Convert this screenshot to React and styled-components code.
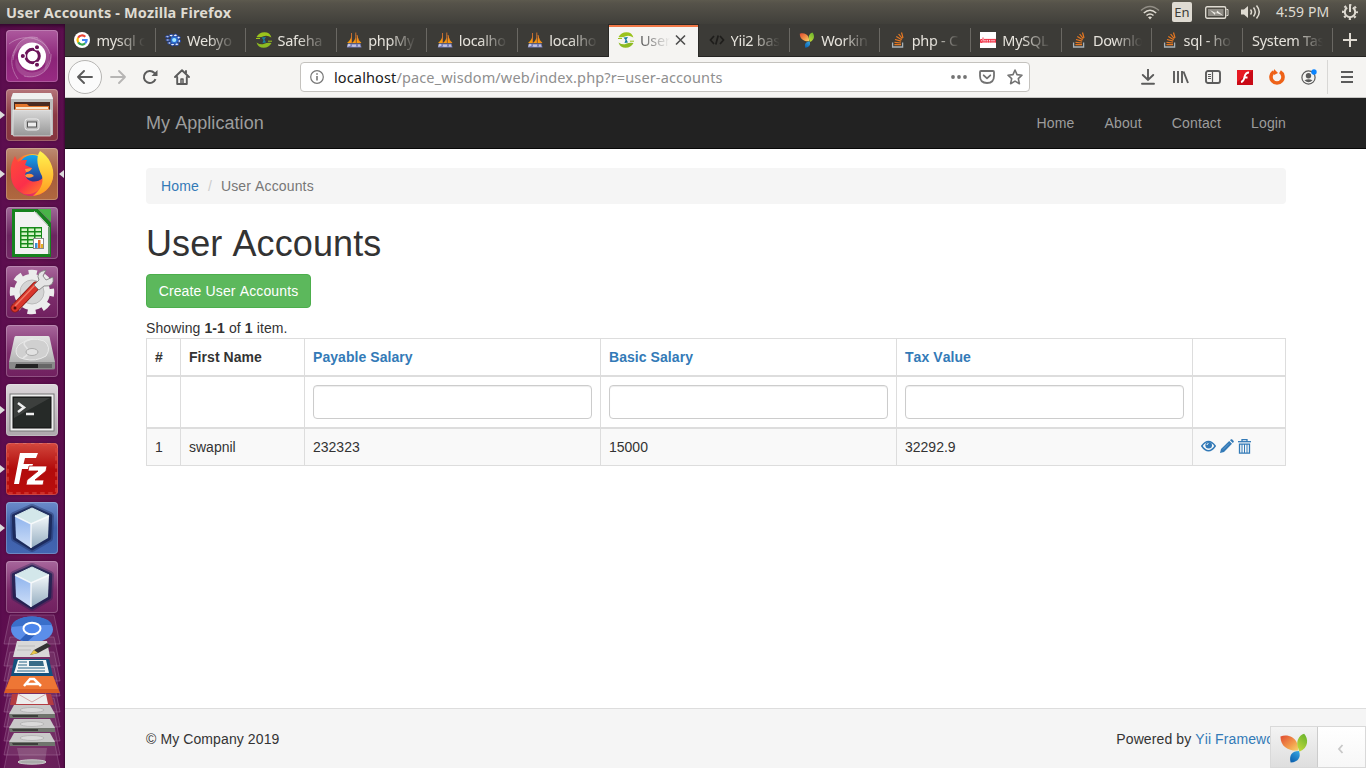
import React from "react";
import styled, { createGlobalStyle, css } from "styled-components";

const GlobalStyle = createGlobalStyle`
  * { box-sizing: border-box; }
  body { margin: 0; overflow: hidden; background: #fff; }
  svg { display: block; flex: none; }
`;

const ui = `"Noto Sans", "Open Sans", sans-serif`;
const web = `"Liberation Sans", Helvetica, Arial, sans-serif`;

/* ---------- desktop shell ---------- */
const Desktop = styled.div`
  width: 1366px;
  height: 768px;
  display: flex;
  flex-direction: column;
  overflow: hidden;
`;
const TitleBar = styled.header`
  height: 24px;
  flex: none;
  display: flex;
  justify-content: space-between;
  align-items: center;
  padding: 0 8px 0 6px;
  background: linear-gradient(#5d5a4e 0, #56534a 3px, #403f3a 24px);
  color: #dfdbd2;
  font: 14px/24px ${ui};
`;
const WindowTitle = styled.div`
  font-weight: 700;
  font-size: 14.5px;
  letter-spacing: 0.14px;
  white-space: nowrap;
`;
const Indicators = styled.div`
  display: flex;
  align-items: center;
`;
const Indicator = styled.div`
  margin-left: ${(p) => p.$gap || 0}px;
`;
const Keyboard = styled(Indicator)`
  width: 20px;
  height: 20px;
  border-radius: 2px;
  background: #dfdbd2;
  color: #3c3b37;
  text-align: center;
  font-size: 13px;
  line-height: 20px;
`;
const Clock = styled(Indicator)`
  width: 54px;
  letter-spacing: 0.1px;
  white-space: nowrap;
`;
const Main = styled.div`
  display: flex;
  flex: 1;
  min-height: 0;
`;

/* ---------- launcher ---------- */
const Launcher = styled.aside`
  width: 65px;
  flex: none;
  padding-top: 6px;
  display: flex;
  flex-direction: column;
  gap: 7px;
  background: linear-gradient(90deg, #5c0d4f, #63114f 50%, #5b0e4d 97%, #3e0a35);
  box-shadow: inset 0 5px 4px -3px #2d0628;
`;
const LaunchRow = styled.div`
  display: flex;
  align-items: center;
  height: 52px;
`;
const Pip = styled.i`
  width: 5px;
  height: 8px;
  margin-right: ${(p) => (p.$right ? 0 : 1)}px;
  margin-left: ${(p) => (p.$right ? 1 : 0)}px;
  background: ${(p) => (p.$on ? "#dcdcdc" : "transparent")};
  clip-path: ${(p) => (p.$right ? "polygon(100% 0, 0 50%, 100% 100%)" : "polygon(0 0, 100% 50%, 0 100%)")};
`;
const Tile = styled.div`
  width: 52px;
  height: 52px;
  border-radius: 4px;
  background: ${(p) => p.$bg};
  box-shadow: inset 0 0 0 1px rgba(255, 255, 255, 0.22), 0 0 3px rgba(30, 0, 30, 0.4);
  overflow: hidden;
`;
const FoldedStack = styled.div`
  margin-top: -6px;
`;

/* ---------- browser chrome ---------- */
const Browser = styled.div`
  flex: 1;
  min-width: 0;
  display: flex;
  flex-direction: column;
`;
const TabStrip = styled.div`
  height: 33px;
  flex: none;
  display: flex;
  background: #3c3b37;
  border-bottom: 1px solid #252422;
`;
const Tab = styled.div`
  width: 90.6px;
  height: 32px;
  flex: none;
  display: flex;
  align-items: center;
  position: relative;
  padding-left: 9.4px;
  color: #e6e3dc;
  font: 14.5px/32px ${ui};
  &::after {
    content: "";
    align-self: center;
    width: 1px;
    height: 24px;
    margin-left: auto;
    background: #6a6863;
  }
  ${(p) =>
    p.$active &&
    css`
      width: 89.4px;
      margin-right: 1.2px;
      height: 33px;
      padding-bottom: 1px;
      background: #f5f4f2;
      color: #5c5c5c;
      box-shadow: inset 0 1px #2b2a27, inset 0 3px #f07746, 0 0 0 1px #2b2a27;
      clip-path: inset(0 -1px 0 -1px);
      &::after { display: none; }
    `}
  ${(p) => p.$beforeActive && css`&::after { display: none; }`}
`;
const TabIcon = styled.div`
  width: 16px;
  height: 16px;
  flex: none;
  margin-right: 6px;
`;
const TabText = styled.div`
  width: ${(p) => p.$w}px;
  white-space: nowrap;
  letter-spacing: -0.3px;
  mask-image: linear-gradient(90deg, #000 calc(100% - 28px), transparent);
`;
const NewTab = styled.div`
  flex: 1;
  display: flex;
  align-items: center;
  justify-content: center;
`;
const ToolBar = styled.div`
  height: 41px;
  flex: none;
  display: flex;
  align-items: center;
  padding: 0 13px 0 3px;
  background: #f5f4f2;
  border-bottom: 1px solid #c6c5c3;
`;
const BackButton = styled.div`
  width: 34px;
  height: 34px;
  flex: none;
  border: 1px solid #b6b5b3;
  border-radius: 50%;
  background: #fbfbfb;
  display: grid;
  place-items: center;
`;
const ToolIcon = styled.div`
  margin-left: ${(p) => p.$gap}px;
`;
const UrlBar = styled.div`
  width: 730px;
  height: 30px;
  flex: none;
  margin-left: 110px;
  padding: 0 6px 0 9px;
  display: flex;
  align-items: center;
  background: #fff;
  border: 1px solid #c4c2be;
  border-radius: 4px;
`;
const Url = styled.div`
  flex: 1;
  margin-left: 8px;
  font: 14.5px/28px ${ui};
  letter-spacing: 0.13px;
  color: #8f8f8f;
  white-space: nowrap;
  b { color: #1a1a1a; font-weight: 400; }
`;
const ToolDivider = styled.div`
  width: 1px;
  height: 34px;
  margin-left: 10px;
  background: #d8d7d5;
`;

/* ---------- web page ---------- */
const Page = styled.div`
  flex: 1;
  min-height: 0;
  display: flex;
  flex-direction: column;
  background: #fff;
  color: #333;
  font: 14px/20px ${web};
  font-kerning: none;
  letter-spacing: 0.1px;
  position: relative;
`;
const Container = styled.div`
  width: 1140px;
  margin-left: 81px;
`;
const Navbar = styled.nav`
  height: 51px;
  flex: none;
  background: #222;
  border-bottom: 1px solid #080808;
`;
const NavInner = styled(Container)`
  display: flex;
  justify-content: space-between;
  line-height: 50px;
  color: #9d9d9d;
`;
const Brand = styled.div`
  font-size: 18px;
  letter-spacing: 0.05px;
`;
const NavLinks = styled.div`
  display: flex;
  gap: 30px;
  letter-spacing: 0.14px;
`;
const Content = styled(Container)`
  flex: 1;
  padding-top: 19px;
`;
const Breadcrumb = styled.div`
  height: 36px;
  padding: 8px 15px;
  background: #f5f5f5;
  border-radius: 4px;
  color: #777;
  letter-spacing: 0.14px;
  i { padding: 0 9px; color: #ccc; font-style: normal; }
`;
const Link = styled.span`
  color: #337ab7;
`;
const Heading = styled.h1`
  margin: 20px 0 10px;
  font-size: 36px;
  line-height: 40px;
  font-weight: 400;
`;
const GreenButton = styled.div`
  width: 165px;
  height: 34px;
  margin-bottom: 10px;
  border: 1px solid #4cae4c;
  border-radius: 4px;
  background: #5cb85c;
  color: #fff;
  line-height: 32px;
  text-align: center;
  letter-spacing: 0.14px;
  white-space: nowrap;
`;
const Grid = styled.div`
  border: solid #ddd;
  border-width: 1px 0 0 1px;
`;
const Row = styled.div`
  display: grid;
  grid-template-columns: 34px 124px 296px 296px 296px 93px;
  height: ${(p) => p.$h}px;
  border-bottom: ${(p) => p.$line}px solid #ddd;
  background: ${(p) => p.$bg || "#fff"};
  font-weight: ${(p) => (p.$head ? 700 : 400)};
  letter-spacing: ${(p) => (p.$head ? 0.06 : 0)}px;
`;
const Cell = styled.div`
  border-right: 1px solid #ddd;
  padding: 8px;
  white-space: nowrap;
`;
const FilterInput = styled.div`
  height: 34px;
  border: 1px solid #ccc;
  border-radius: 4px;
  box-shadow: inset 0 1px 1px rgba(0, 0, 0, 0.075);
`;
const Actions = styled.div`
  display: flex;
  gap: 4px;
  padding-top: 2px;
`;
const Footer = styled.footer`
  height: 60px;
  flex: none;
  background: #f5f5f5;
  border-top: 1px solid #ddd;
`;
const FooterInner = styled(Container)`
  display: flex;
  justify-content: space-between;
  padding-top: 20px;
`;
const DebugBar = styled.div`
  position: absolute;
  right: 0;
  bottom: 0;
  width: 96px;
  height: 42px;
  display: flex;
  border: 1px solid #d9d9d9;
  background: linear-gradient(#fff, #f7f7f7);
`;
const DebugLogo = styled.div`
  width: 47px;
  padding-top: 1px;
  display: grid;
  place-items: center;
  background: linear-gradient(#f3f3f3, #dedede);
  border-right: 1px solid #ccc;
`;
const DebugToggle = styled.div`
  flex: 1;
  display: grid;
  place-items: center;
  padding: 3px 2px 0 0;
`;

/* ---------- favicons ---------- */
const Google = () => (
  <svg width="16" height="16" viewBox="0 0 16 16" fill="none" strokeWidth="2.2">
    <circle cx="8" cy="8" r="8" fill="#fff" />
    <path d="M4.1 5.7A4.6 4.6 0 0 1 11.3 4.8" stroke="#ea4335" />
    <path d="M4.2 10.4A4.6 4.6 0 0 1 4.1 5.7" stroke="#fbbc05" />
    <path d="M11.2 11.3A4.6 4.6 0 0 1 4.2 10.4" stroke="#34a853" />
    <path d="M8 8H12.6A4.6 4.6 0 0 1 11.2 11.3" stroke="#4285f4" />
  </svg>
);
const Webyog = () => (
  <svg width="16" height="16" viewBox="0 0 16 16">
    <g fill="#e8eefc" stroke="#1c3f9c" strokeWidth="1">
      <ellipse cx="2.4" cy="4.8" rx="1.9" ry="1" /><ellipse cx="2.8" cy="8" rx="2" ry="1" />
      <ellipse cx="6.2" cy="3.6" rx="1.8" ry="1.3" /><ellipse cx="10.4" cy="3.4" rx="1.8" ry="1.3" />
      <ellipse cx="13.6" cy="5.6" rx="1.6" ry="1.4" /><ellipse cx="14.2" cy="9" rx="1.3" ry="1.5" />
      <ellipse cx="11.8" cy="12.2" rx="1.9" ry="1.3" /><ellipse cx="7.6" cy="12.6" rx="1.9" ry="1.2" />
      <ellipse cx="4.4" cy="11" rx="1.8" ry="1.1" />
    </g>
    <circle cx="9.200" cy="8" r="3.800" fill="#2a6bd0" /><circle cx="9.200" cy="8" r="2.100" fill="#9fe6ff" />
  </svg>
);
const Safe = () => (
  <svg width="16" height="16" viewBox="0 0 16 16">
    <path d="M.5 5Q3 .2 8.5.2T15.4 5.6Q11 2.8 7.6 4.3T.5 5Z" fill="#9bc31c" />
    <path d="M15.5 11Q13 15.8 7.6 15.8T.5 10.4Q4.8 13.4 8.2 11.8T15.5 11Z" fill="#8dbb22" />
    <path d="M0 6.500h4M12 9.200h4" stroke="#9bc31c" />
    <path d="M5.500 5.500 10 5 8.400 7.500 10 10.500 6.500 11 7.500 8Z" fill="#197f9d" />
  </svg>
);
const Pma = () => (
  <svg width="16" height="16" viewBox="0 0 16 16">
    <path d="M5.500 1Q6 7 1 11H5.500ZM9.500.5Q11 7 6 11H10ZM11 3Q12 8 15.500 11H10.500Z" fill="#f89c0e" />
    <path d="M5.500 1V11M9.800.5V11M11 3Q11.300 8 14 11" fill="none" stroke="#e57a30" strokeWidth=".8" />
    <path d="M.8 15.500 2 11.500H14.500L15.500 15.500Z" fill="#777db5" />
    <path d="M2 15V12.400H4V13.600H2M6 15 7 12.500 8 15 9 12.500 10 15M12 15 13 12.500 14 15" fill="none" stroke="#d9d9ee" strokeWidth=".8" />
  </svg>
);
const CodeIcon = () => (
  <svg width="16" height="16" viewBox="0 0 16 16" fill="none" stroke="#1e1d1b" strokeWidth="1.700">
    <path d="M5 4 1.500 8 5 12M11 4 14.500 8 11 12M9.200 3.500 6.800 12.500" />
  </svg>
);
const Yii = ({ s = 16 }) => (
  <svg width={s} height={s} viewBox="0 0 30 31">
    <defs>
      <linearGradient id="yo" x2="1" y2="1"><stop stopColor="#e04b31" /><stop offset=".6" stopColor="#f29a4b" /><stop offset="1" stopColor="#f6d46a" /></linearGradient>
      <linearGradient id="yg" x1=".7" x2=".2" y2="1"><stop stopColor="#6cb52d" /><stop offset="1" stopColor="#c4da3a" /></linearGradient>
      <linearGradient id="yb" x1=".8" x2=".2" y2="1"><stop stopColor="#35a4df" /><stop offset="1" stopColor="#0a5fae" /></linearGradient>
    </defs>
    <path d="M1 3.500C8 1 15 4 17.500 9 19 12 19.500 15 19.300 18 11 19 1 15 1 3.500Z" fill="url(#yo)" />
    <path d="M25.500.8C30 6 30.500 15 20.500 19.500 20 15 17 13 19 7 20.500 3.500 22.500 1.500 25.500.8Z" fill="url(#yg)" />
    <path d="M20 18.500C22.500 24 20 30 11.500 30.500 9.500 23 13 18.500 20 18.500Z" fill="url(#yb)" />
  </svg>
);
const Stack = () => (
  <svg width="16" height="16" viewBox="0 0 16 16" fill="none">
    <path d="M2.600 10.500V15H12.600V10.500" stroke="#a9b2b8" strokeWidth="1.300" />
    <path d="M4.400 12.700H11M4.500 10.300 11 11M5 7.500 11.200 9.200M6.300 4.500 11.700 7.700M8.600 2 12.300 6.700M11.500.5 13 5.800" stroke="#e87922" strokeWidth="1.200" />
  </svg>
);
const RedWord = () => (
  <svg width="16" height="16" viewBox="0 0 16 16">
    <rect width="16" height="16" fill="#fff" />
    <path d="M.5 7.500H2V10.500H.5ZM3 5.500V10.500M5 7V10.500M6.800 7V10.500M8.500 7V10.500M10.300 7V10.500M12 7V10.500M14 7V10.500M15.500 7V10.500M.5 9.900H16M4 7.400H16" fill="none" stroke="#f0374b" strokeWidth="1" />
  </svg>
);

const G = "#5b5b5b";
const L = "#dfdbd2";

/* ---------- launcher icons ---------- */
const Tri = () => (
  <svg width="52" height="52" viewBox="0 0 52 52">
    <path d="M7 30C8 12 20 4 32 8 44 13 48 30 38 42 42 26 38 16 26 14 16 14 9 20 7 30Z" fill="#fff" opacity=".16" />
    <path d="M45 24C46 40 32 50 18 46 10 42 8 34 10 28 14 40 22 44 30 42 38 40 43 34 45 24Z" fill="#fff" opacity=".14" />
    <g fill="none" stroke="#fff" opacity=".3">
      <path d="M7 30C8 12 20 4 32 8" /><path d="M3 14C18 2 40 8 44 24" /><path d="M12 49C4 38 4 26 10 18" /><path d="M45 24C46 40 32 50 18 46" />
    </g>
    <circle cx="26" cy="26.500" r="14" fill="#fff" />
    <circle cx="26.500" cy="26" r="6.800" fill="none" stroke="#6b1358" strokeWidth="3" />
    <g fill="#6b1358" stroke="#fff" strokeWidth="1.100"><circle cx="16.800" cy="26" r="2.600" /><circle cx="31" cy="17.300" r="2.600" /><circle cx="31" cy="34.800" r="2.600" /></g>
  </svg>
);
const Files = () => (
  <svg width="52" height="52" viewBox="0 0 52 52">
    <defs><linearGradient id="fm" y2="1" x2="0"><stop stopColor="#d9d9d9" /><stop offset="1" stopColor="#979797" /></linearGradient></defs>
    <path d="M7 4H45L47 9V46H5V9Z" fill="#bcbcbc" />
    <path d="M7 4H45L47 10H5Z" fill="#f0f0f0" />
    <path d="M8 13H44V22H8Z" fill="#4a2a22" />
    <path d="M9 15H21L23 17H43V22H9Z" fill="#e3752b" /><path d="M10 18H42V20H10Z" fill="#f8e7d0" />
    <path d="M7 21H45V46Q45 47 44 47H8Q7 47 7 46Z" fill="url(#fm)" stroke="#eee" strokeWidth=".7" />
    <rect x="19" y="30" width="14" height="11" rx="2.500" fill="#bbb" stroke="#eee" />
    <rect x="21.500" y="33" width="9" height="5" fill="#eee" stroke="#555" />
  </svg>
);
const Firefox = () => (
  <svg width="52" height="52" viewBox="0 0 52 52">
    <defs>
      <radialGradient id="ff" cx=".82" cy=".15" r="1"><stop stopColor="#fff24a" /><stop offset=".35" stopColor="#ffbe2e" /><stop offset=".65" stopColor="#ff5b33" /><stop offset="1" stopColor="#d51b7a" /></radialGradient>
      <linearGradient id="fb" x2="0" y2="1"><stop stopColor="#13a7ee" /><stop offset="1" stopColor="#2a2c86" /></linearGradient>
      <linearGradient id="fy" x2="0" y2="1"><stop stopColor="#fff44f" /><stop offset="1" stopColor="#ff9a1f" /></linearGradient>
      <linearGradient id="fr" x1=".1" x2=".9" y2="1"><stop stopColor="#ff4a3a" /><stop offset=".6" stopColor="#fb2f4a" /><stop offset="1" stopColor="#ff7a2a" /></linearGradient>
    </defs>
    <circle cx="26" cy="27" r="21" fill="url(#ff)" />
    <circle cx="26.500" cy="21" r="14" fill="url(#fb)" />
    <path d="M5 26C4 18 7 12 9 8L12 14C14 12 17 12 21 12L19 17 26 20C25 24 19 23 19 27 21 34 30 36 37 30 38 40 28 48 18 46 9 42 5 35 5 26Z" fill="url(#fr)" />
    <path d="M34 3C43 8 49 20 47 30 45 40 37 47 27 48 34 42 38 36 36 28 32 20 29 10 34 3Z" fill="url(#fy)" />
    <path d="M19 21 26 20Q24 24 20 24ZM19 27Q25 24 28 28 24 31 20 29Z" fill="#ff9640" />
  </svg>
);
const Calc = () => (
  <svg width="52" height="52" viewBox="0 0 52 52">
    <path d="M6 2H32L45 16V50H6Z" fill="#16821e" /><path d="M9 5H30L42 18V47H9Z" fill="#f2f2f2" />
    <path d="M32 2H45V15Z" fill="#49b348" /><path d="M28 4 43 20V47" fill="none" stroke="#bbb" />
    <rect x="14" y="20" width="22" height="21" fill="#178a1a" />
    <g fill="#d6f5c8">{[0, 1, 2, 3, 4].map((r) => [0, 1, 2].map((c) => <rect key={`${r}${c}`} x={15.5 + c * 7} y={21.5 + r * 4} width="5.5" height="2.5" />))}</g>
    <rect x="27.500" y="31.500" width="10" height="10" fill="#fff" stroke="#888" />
    <path d="M29 36h2.500v5H29Z" fill="#3c8fd2" /><path d="M32 33h2.500v8H32Z" fill="#e36c22" /><path d="M35 37h2v4h-2Z" fill="#e5b022" />
  </svg>
);
const Settings = () => (
  <svg width="52" height="52" viewBox="0 0 52 52">
    <circle cx="26" cy="26" r="14" fill="none" stroke="#ececec" strokeWidth="8" />
    <circle cx="26" cy="26" r="19.500" fill="none" stroke="#ececec" strokeWidth="5.500" strokeDasharray="8.300 7.015" strokeDashoffset="4" />
    <circle cx="26" cy="26" r="12" fill="#d5d5d5" stroke="#bbb" />
    <path d="M9 42 30 20" stroke="#8d1c18" strokeWidth="9" strokeLinecap="round" /><path d="M9 42 30 20" stroke="#d9362c" strokeWidth="7" strokeLinecap="round" />
    <path d="M9 40 29 19" stroke="#ee7a68" strokeWidth="1.500" /><circle cx="9" cy="42" r="1.500" fill="#5a0b0b" />
    <path d="M28 19 33 14Q29 6 40 4L37 10 40 14 47 11Q49 21 38 20L33 24Z" fill="#e5e5e5" stroke="#777" strokeWidth=".8" />
  </svg>
);
const Disk = () => (
  <svg width="52" height="52" viewBox="0 0 52 52">
    <defs><linearGradient id="dk" x2="0" y2="1"><stop stopColor="#e4e4e4" /><stop offset="1" stopColor="#b4b4b4" /></linearGradient></defs>
    <path d="M10 11H42Q43 11 43.500 12L49 37H3L8.500 12Q9 11 10 11Z" fill="url(#dk)" /><path d="M3 37H49V43Q49 44.500 47 44.500H5Q3 44.500 3 43Z" fill="#8a8a8a" /><path d="M10 39H32V43H9Z" fill="#222" /><path d="M32 39H46V43H32Z" fill="#666" />
    <path d="M11 30Q8 24 14 19 25 11 38 16 46 22 40 31 30 37 18 34 12 33 11 30Z" fill="#d0d0d0" stroke="#e9e9e9" />
    <path d="M17 33Q26 28 20 22T27 14" fill="none" stroke="#e6e6e6" strokeWidth="1.500" />
    <ellipse cx="26" cy="27" rx="6" ry="3.500" fill="#e2e2e2" stroke="#aaa" />
  </svg>
);
const Terminal = () => (
  <svg width="52" height="52" viewBox="0 0 52 52">
    <rect x="4" y="10" width="44" height="37" fill="#efefef" stroke="#777" /><rect x="7" y="13" width="38" height="31" fill="#262a28" stroke="#111" />
    <path d="M8 14H44L8 34Z" fill="#fff" opacity=".1" />
    <path d="M12 19 18 23.500 12 28M20 30H28" fill="none" stroke="#eee" strokeWidth="2.500" />
  </svg>
);
const Filezilla = () => (
  <svg width="52" height="52" viewBox="0 0 52 52">
    <rect x="1.500" y="1.500" width="49" height="49" rx="3" fill="none" stroke="#d8463e" strokeWidth="3" strokeDasharray="4.500 3.500" opacity=".6" />
    <path d="M14 10H32L30 15H19L17.500 21H27L25.500 26H16L13 41H8Z" fill="#fff" />
    <path d="M23 23H41L40 28 29 37H38L37 42H20L21 37 32 28H22Z" fill="#fff" stroke="#b20b0b" strokeWidth=".8" />
  </svg>
);
const Cube = () => (
  <svg width="52" height="52" viewBox="0 0 52 52">
    <defs><linearGradient id="cl" x2="0" y2="1"><stop stopColor="#8eb3ed" /><stop offset="1" stopColor="#cfdff8" /></linearGradient><linearGradient id="cr" x2="0" y2="1"><stop stopColor="#f2f7fa" /><stop offset="1" stopColor="#94adc0" /></linearGradient></defs>
    <g fill="#17224f" stroke="#17224f" strokeLinejoin="round">
      <path d="M26 6 44 14 43 36 26 46 9 36 8 14Z" strokeWidth="8" opacity=".35" />
      <path d="M26 6 44 14 43 36 26 46 9 36 8 14Z" strokeWidth="4.500" opacity=".75" />
    </g>
    <path d="M26 6 43 14 25 22 9 14Z" fill="#d3e7ea" stroke="#d3e7ea" strokeLinejoin="round" /><path d="M9 14 25 22V46L10 36Z" fill="url(#cl)" /><path d="M25 22 43 14 42 36 25 46Z" fill="url(#cr)" />
    <path d="M9 14 25 22 43 14M25 22V46" fill="none" stroke="#fff" strokeWidth="1.500" opacity=".8" />
  </svg>
);
const drawers = [705, 719, 733];
const Folded = () => (
  <svg width="65" height="154" viewBox="0 614 65 154">
    <g fill="#fff" fillOpacity=".07" stroke="#c79bc0" strokeOpacity=".3" strokeWidth="1">
      {[615, 637, 652, 667, 683, 698, 712, 726, 740].map((y) => <path key={y} d={`M10 ${y}H54L60 ${y + 29}H4Z`} />)}
    </g>
    <ellipse cx="32" cy="629.500" rx="21" ry="13" fill="#5b8ee9" /><path d="M11 627Q14 617 32 616.500 49 617 52 625H32Z" fill="#3a6fca" /><path d="M20 640 29 631 36 634 27 642Z" fill="#2f61bd" />
    <ellipse cx="32" cy="628.500" rx="8.500" ry="5.800" fill="#4c86ec" stroke="#fff" strokeWidth="2" />
    <path d="M17 641H47L50 657H13Z" fill="#d8d8d8" /><path d="M18 646h17M17 650h14" stroke="#bbb" /><path d="M30 655 34 650 47 643 51 646 38 653Z" fill="#333" /><path d="M30 655 34 650 38 653Z" fill="#e8c648" />
    <path d="M14 659H49L53 676H11Z" fill="#14517d" /><path d="M18 660H46L49 673H14Z" fill="#f2f5f6" /><path d="M19 662h8M18 665h9M18 668h27M17 671h28" stroke="#256285" /><path d="M29 661H43L44 666H29Z" fill="#386b88" />
    <path d="M11 676H53L60 693H4Z" fill="#d95b23" /><path d="M11 676H53L58 689H6Z" fill="#ee7635" /><path d="M24 686 30 679H34L41 686M26 684H38" fill="none" stroke="#fff" strokeWidth="2.500" />
    <path d="M12 694H51L54 705H10Z" fill="#b33c42" /><path d="M18 694H46L48 704H16Z" fill="#ededed" /><path d="M18 694 32 702 46 694" fill="none" stroke="#d6a8a8" />
    {drawers.map((y) => (
      <g key={y}><path d={`M14 ${y}H50L55 ${y + 9}H9Z`} fill="#c9c9c9" /><path d={`M9 ${y + 9}H55V${y + 13}H10Z`} fill="#70756e" /><path d={`M12 ${y + 10}H38V${y + 12}H13Z`} fill="#3c3e3b" /><ellipse cx="32" cy={y + 5} rx="12" ry="2.500" fill="#dadada" stroke="#b8b8b8" /></g>
    ))}
    <path d="M17 748H47L45 762H20Z" fill="#ccc" opacity=".22" /><ellipse cx="32" cy="762" rx="14" ry="2.200" fill="#aaa" stroke="#ccc" />
  </svg>
);

const purple = "linear-gradient(#a8679c, #7d2d6c 55%, #70205f)";
const launchers = [
  [Tri, "linear-gradient(#ad5a9e, #8b2478 55%, #992b83)", 0],
  [Files, "linear-gradient(#b5757a, #8b3a44 50%, #86363f)", 1],
  [Firefox, "linear-gradient(#bd8b72, #a55c3c 50%, #b0683f)", 1],
  [Calc, "linear-gradient(#a06a98, #6c2560 55%, #742a66)", 0],
  [Settings, purple, 0],
  [Disk, purple, 0],
  [Terminal, "linear-gradient(#dcd6da, #aea7ac)", 1],
  [Filezilla, "linear-gradient(#d2483d, #b20b0b 50%, #b90e0d)", 1],
  [Cube, "linear-gradient(#6b8bca, #3d5ea8 50%, #4366b2)", 1],
  [Cube, purple, 0],
];

const tabs = [
  [Google, "mysql c"], [Webyog, "Webyo"], [Safe, "Safeha"], [Pma, "phpMy"], [Pma, "localho"], [Pma, "localho"],
  [Safe, "User"], [CodeIcon, "Yii2 bas"], [Yii, "Workin"], [Stack, "php - C"], [RedWord, "MySQL"], [Stack, "Downlo"], [Stack, "sql - ho"], [null, "System Tas"],
];

export default function App() {
  return (
    <Desktop>
      <GlobalStyle />
      <TitleBar>
        <WindowTitle>User Accounts - Mozilla Firefox</WindowTitle>
        <Indicators>
          <Indicator>
            <svg width="20" height="15" viewBox="0 0 20 15" fill="none" stroke={L} strokeWidth="1.600"><path d="M1 5.500Q10-2.500 19 5.500" opacity=".45" /><path d="M3.800 8Q10 2.500 16.200 8M6.500 10.500Q10 7.500 13.500 10.500" /><path d="M8 12.200Q10 10.800 12 12.200L10 14.500Z" fill={L} stroke="none" /></svg>
          </Indicator>
          <Keyboard $gap={12}>En</Keyboard>
          <Indicator $gap={13}>
            <svg width="24" height="13" viewBox="0 0 24 13"><rect x=".7" y=".7" width="20" height="11.600" rx="1.500" fill="none" stroke={L} strokeWidth="1.400" /><path d="M21.500 3.500H23V9.500H21.500" fill="none" stroke={L} /><rect x="3" y="3" width="15.500" height="7" fill="#8f8c85" /><path d="M5 4 11.500 7.500 12 4.500 18 9.500 10.500 6.500 10 9Z" fill="#f0ede6" /></svg>
          </Indicator>
          <Indicator $gap={12}>
            <svg width="20" height="16" viewBox="0 0 20 16" fill="none" stroke={L} strokeWidth="1.500"><path d="M0 5.500H3L7 2V14L3 10.500H0Z" fill={L} stroke="none" /><path d="M9.500 5.500Q11.500 8 9.500 10.500M12.500 3.500Q16 8 12.500 12.500M15.500 1.500Q21 8 15.500 14.500" /></svg>
          </Indicator>
          <Clock $gap={15}>4:59 PM</Clock>
          <Indicator $gap={12}>
            <svg width="16" height="16" viewBox="0 0 16 16" fill="none" stroke={L}><path d="M5.200 3.600A5.200 5.200 0 1 0 10.800 3.600" strokeWidth="2" /><circle cx="8" cy="8" r="7" strokeWidth="2" strokeDasharray="2.200 3.300" strokeDashoffset="1" /><path d="M8 1V8" strokeWidth="2" /></svg>
          </Indicator>
        </Indicators>
      </TitleBar>
      <Main>
        <Launcher>
          {launchers.map(([Icon, bg, on], i) => (
            <LaunchRow key={i}>
              <Pip $on={on} />
              <Tile $bg={bg}><Icon /></Tile>
              <Pip $right $on={i === 2} />
            </LaunchRow>
          ))}
          <FoldedStack><Folded /></FoldedStack>
        </Launcher>
        <Browser>
          <TabStrip>
            {tabs.map(([Icon, label], i) => (
              <Tab key={i} $active={i === 6} $beforeActive={i === 5}>
                {Icon && <TabIcon><Icon /></TabIcon>}
                <TabText $w={i === 6 ? 30 : Icon ? 49 : 71}>{label}</TabText>
                {i === 6 && <svg width="20" height="12" viewBox="-5 0 20 12" fill="none" stroke="#4d4d4d" strokeWidth="1.600"><path d="M1 1.500 10 10.500M10 1.500 1 10.500" /></svg>}
              </Tab>
            ))}
            <NewTab><svg width="14" height="14" viewBox="0 0 14 14"><path d="M7 0V14M0 7H14" stroke={L} strokeWidth="2" /></svg></NewTab>
          </TabStrip>
          <ToolBar>
            <BackButton><svg width="16" height="14" viewBox="0 0 16 14" fill="none" stroke={G} strokeWidth="1.900" strokeLinecap="round" strokeLinejoin="round"><path d="M7 1 1 7 7 13M1 7H15" /></svg></BackButton>
            <ToolIcon $gap={8}><svg width="16" height="14" viewBox="0 0 16 14" fill="none" stroke="#b6b5b4" strokeWidth="1.800" strokeLinecap="round" strokeLinejoin="round"><path d="M9 1 15 7 9 13M15 7H1" /></svg></ToolIcon>
            <ToolIcon $gap={16}><svg width="16" height="16" viewBox="0 0 16 16" fill="none" stroke={G} strokeWidth="2"><path d="M13.500 10.200A6 6 0 1 1 12.200 3.800L14 5.500" /><path d="M15.500 1V7H9.500Z" fill={G} stroke="none" /></svg></ToolIcon>
            <ToolIcon $gap={16}><svg width="16" height="16" viewBox="0 0 16 16" fill="none" stroke={G} strokeWidth="1.900" strokeLinejoin="round" strokeLinecap="round"><path d="M1 8 8 1.200 15 8M3.200 8V15H12.800V8M12 2V4" /><path d="M7 15V10H9V15" strokeWidth="1.500" /></svg></ToolIcon>
            <UrlBar>
              <svg width="16" height="16" viewBox="0 0 16 16" fill="none" stroke="#777"><circle cx="7" cy="8" r="6.300" strokeWidth="1.200" /><path d="M7 7V11.500M7 4.200V5.800" strokeWidth="1.600" /></svg>
              <Url><b>localhost</b>/pace_wisdom/web/index.php?r=user-accounts</Url>
              <svg width="16" height="4" viewBox="0 0 16 4" fill="#737373"><circle cx="2" cy="2" r="1.900" /><circle cx="8" cy="2" r="1.900" /><circle cx="14" cy="2" r="1.900" /></svg>
              <ToolIcon $gap={12}><svg width="16" height="14" viewBox="0 0 16 14" fill="none" stroke="#737373" strokeWidth="1.800" strokeLinecap="round" strokeLinejoin="round"><path d="M2 1H14Q15 1 15 2V6Q15 13 8 13 1 13 1 6V2Q1 1 2 1ZM4.700 5.300 8 8.300 11.300 5.300" /></svg></ToolIcon>
              <ToolIcon $gap={12}><svg width="16" height="16" viewBox="0 0 16 16" fill="none" stroke="#737373" strokeWidth="1.600" strokeLinejoin="round"><path d="M8 1 10 5.600 15 6.200 11.300 9.600 12.400 14.700 8 12.100 3.600 14.700 4.700 9.600 1 6.200 6 5.600Z" /></svg></ToolIcon>
            </UrlBar>
            <ToolIcon $gap={111}><svg width="14" height="16" viewBox="0 0 14 16" fill="none" stroke={G} strokeWidth="1.900"><path d="M7 0V11M1.800 6 7 11 12.200 6M1 14.800H13" strokeLinecap="round" /></svg></ToolIcon>
            <ToolIcon $gap={18}><svg width="16" height="14" viewBox="0 0 16 14" fill="none" stroke={G} strokeWidth="1.900"><path d="M1 1V13M5 1V13M9 1V13M10.500 1.500 15 13" /></svg></ToolIcon>
            <ToolIcon $gap={16}><svg width="16" height="14" viewBox="0 0 16 14" fill="none" stroke={G}><rect x="1" y="1" width="14" height="12" rx="2" strokeWidth="1.900" /><path d="M7.500 1V13" strokeWidth="1.200" /><path d="M3 4.500H6M3 6.500H6M3 8.500H6" /></svg></ToolIcon>
            <ToolIcon $gap={16}><svg width="16" height="15" viewBox="0 0 16 15"><rect width="16" height="15" fill="#c90a16" /><path d="M0 0H16L0 12Z" fill="#ef1e27" opacity=".8" /><path d="M12 2.500Q8.500 2.500 7.500 7T4 12M6.500 7.500H10.500" fill="none" stroke="#fff" strokeWidth="1.900" /></svg></ToolIcon>
            <ToolIcon $gap={16}><svg width="16" height="16" viewBox="0 0 16 16" fill="none" stroke="#ee6218" strokeWidth="3.600"><path d="M5 2.800A6 6 0 1 0 11 2.800" /><path d="M5 0 9 4 5 6Z" fill="#ee6218" stroke="none" /></svg></ToolIcon>
            <ToolIcon $gap={16}><svg width="16" height="16" viewBox="0 0 16 16"><circle cx="7.500" cy="8.500" r="6.600" fill="none" stroke={G} strokeWidth="1.200" /><circle cx="7.500" cy="6.800" r="2.700" fill={G} /><path d="M3.500 11.300Q7.500 9 11.500 11.300 7.500 15 3.500 11.300Z" fill={G} /><circle cx="13" cy="3" r="2.700" fill="#0a84ff" /></svg></ToolIcon>
            <ToolDivider />
            <ToolIcon $gap={13}><svg width="12" height="12" viewBox="0 0 12 12"><path d="M0 1H12M0 6H12M0 11H12" stroke={G} strokeWidth="1.900" /></svg></ToolIcon>
          </ToolBar>
          <Page>
            <Navbar>
              <NavInner>
                <Brand>My Application</Brand>
                <NavLinks><span>Home</span><span>About</span><span>Contact</span><span>Login</span></NavLinks>
              </NavInner>
            </Navbar>
            <Content>
              <Breadcrumb><Link>Home</Link><i>/</i>User Accounts</Breadcrumb>
              <Heading>User Accounts</Heading>
              <GreenButton>Create User Accounts</GreenButton>
              <div>Showing <b>1-1</b> of <b>1</b> item.</div>
              <Grid>
                <Row $h={38} $line={2} $head>
                  <Cell>#</Cell><Cell>First Name</Cell>
                  <Cell><Link>Payable Salary</Link></Cell><Cell><Link>Basic Salary</Link></Cell><Cell><Link>Tax Value</Link></Cell><Cell />
                </Row>
                <Row $h={52} $line={2}>
                  <Cell /><Cell />
                  <Cell><FilterInput /></Cell><Cell><FilterInput /></Cell><Cell><FilterInput /></Cell><Cell />
                </Row>
                <Row $h={37} $line={1} $bg="#f9f9f9">
                  <Cell>1</Cell><Cell>swapnil</Cell><Cell>232323</Cell><Cell>15000</Cell><Cell>32292.9</Cell>
                  <Cell>
                    <Actions>
                      <svg width="15" height="14" viewBox="0 0 15 14"><path d="M.8 7Q4 2.600 7.500 2.600T14.200 7Q11 11.800 7.500 11.800T.8 7Z" fill="none" stroke="#337ab7" strokeWidth="1.500" /><circle cx="7.700" cy="6.300" r="3.300" fill="#337ab7" /><path d="M6 6Q6 4.500 7.500 4.500" stroke="#f9f9f9" fill="none" /></svg>
                      <svg width="14" height="14" viewBox="0 0 14 14" fill="#337ab7"><path d="M0 14 1 10 9.200 2 12 4.800 4 13ZM10 1.200 11 .3Q11.500 0 12 .3L13.700 2Q14 2.500 13.700 3L12.800 4Z" /><path d="M3 10.500 9 4.500" stroke="#86b2da" strokeWidth=".6" /></svg>
                      <svg width="13" height="15" viewBox="0 0 13 15" fill="none" stroke="#337ab7"><path d="M0 2.700H13" strokeWidth="1.300" /><path d="M4 2.500V.7H9V2.500" strokeWidth="1.300" /><path d="M1.500 5.200H11.500V14.200H1.500Z" strokeWidth="1.300" /><path d="M4 5V14M6.500 5V14M9 5V14" /></svg>
                    </Actions>
                  </Cell>
                </Row>
              </Grid>
            </Content>
            <Footer>
              <FooterInner><div>© My Company 2019</div><div>Powered by <Link>Yii Framework</Link></div></FooterInner>
            </Footer>
            <DebugBar>
              <DebugLogo><Yii s={30} /></DebugLogo>
              <DebugToggle><svg width="8" height="10" viewBox="0 0 8 10"><path d="M5.500 1 2 5 5.500 9" fill="none" stroke="#c8c8c8" strokeWidth="1.800" /></svg></DebugToggle>
            </DebugBar>
          </Page>
        </Browser>
      </Main>
    </Desktop>
  );
}
